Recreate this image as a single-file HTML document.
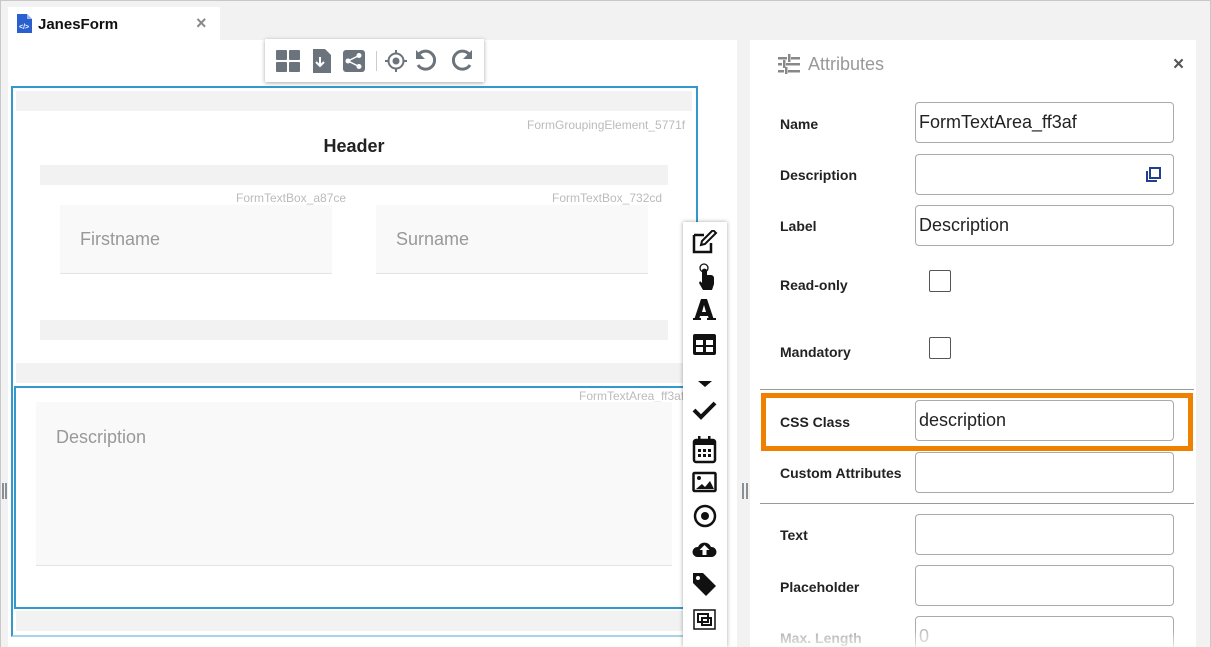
<!DOCTYPE html>
<html><head><meta charset="utf-8"><style>
*{box-sizing:border-box;margin:0;padding:0}
html,body{width:1211px;height:647px;overflow:hidden}
body{background:#f2f2f2;font-family:"Liberation Sans",sans-serif;position:relative}
.a{position:absolute}
.bar{position:absolute;background:#f2f2f2}
.lbl{position:absolute;font-size:12px;color:#bbb;white-space:nowrap}
.inp{position:absolute;background:#f9f9f9;border-bottom:1px solid #e3e3e3;color:#999;font-size:18px}
.fl{position:absolute;left:780px;font-size:14px;font-weight:bold;color:#222}
.fi{position:absolute;left:915px;width:259px;height:41px;border:1px solid #aaa;border-radius:4px;background:#fff;font-size:18px;color:#222;padding:9px 0 0 3px}
.cb{position:absolute;left:929px;width:22px;height:22px;border:1.5px solid #555;border-radius:2px;background:#fff}
</style></head><body>
<div class="a" style="left:8px;top:7px;width:212px;height:34px;background:#fff"></div>
<svg class="a" style="left:17px;top:14px" width="15" height="19" viewBox="0 0 15 19"><path d="M0 0h10l5 5v14H0z" fill="#2a5fd0"/><path d="M10 0v5h5" fill="#9bb7ee"/><text x="2" y="15" font-size="7" fill="#fff" font-family="Liberation Sans" font-weight="bold">&lt;/&gt;</text></svg>
<div class="a" style="left:38px;top:16px;font-size:15px;font-weight:bold;color:#111">JanesForm</div>
<div class="a" style="left:196px;top:13px;font-size:18px;color:#888;font-weight:bold">×</div>
<div class="a" style="left:8px;top:40px;width:729px;height:607px;background:#fff"></div>
<div class="a" style="left:2px;top:483px;width:5px;height:16px;border-left:2px solid #8a8f96;border-right:2px solid #8a8f96"></div>
<div class="a" style="left:742px;top:483px;width:6px;height:16px;border-left:2px solid #8a8f96;border-right:2px solid #8a8f96"></div>
<div class="a" style="left:750px;top:40px;width:446px;height:607px;background:#fff"></div>
<div class="a" style="left:11px;top:86px;width:687px;height:551px;border:2px solid #3399cc;border-bottom-color:#a8d4ea"></div>
<div class="bar" style="left:16px;top:91px;width:676px;height:20px"></div>
<div class="lbl" style="left:527px;top:118px">FormGroupingElement_5771f</div>
<div class="a" style="left:0;width:708px;top:136px;text-align:center;font-size:18px;font-weight:bold;color:#222">Header</div>
<div class="bar" style="left:40px;top:165px;width:628px;height:20px"></div>
<div class="lbl" style="left:236px;top:191px">FormTextBox_a87ce</div>
<div class="lbl" style="left:552px;top:191px">FormTextBox_732cd</div>
<div class="inp" style="left:60px;top:205px;width:272px;height:69px;padding:24px 0 0 20px">Firstname</div>
<div class="inp" style="left:376px;top:205px;width:272px;height:69px;padding:24px 0 0 20px">Surname</div>
<div class="bar" style="left:40px;top:320px;width:628px;height:20px"></div>
<div class="bar" style="left:16px;top:363px;width:676px;height:20px"></div>
<div class="a" style="left:14px;top:386px;width:690px;height:223px;border:2px solid #3399cc"></div>
<div class="lbl" style="left:579px;top:389px">FormTextArea_ff3af</div>
<div class="inp" style="left:36px;top:402px;width:636px;height:164px;padding:25px 0 0 20px">Description</div>
<div class="bar" style="left:16px;top:611px;width:676px;height:20px"></div>
<div class="a" style="left:265px;top:39px;width:219px;height:43px;background:#fff;box-shadow:0 1px 4px rgba(0,0,0,.35)"></div>
<svg class="a" style="left:276px;top:48px" width="200" height="26" viewBox="0 0 200 26" fill="#6b737c">
<rect x="0" y="2" width="11" height="10" rx="1"/><rect x="13" y="2" width="11" height="10" rx="1"/><rect x="0" y="14" width="11" height="10" rx="1"/><rect x="13" y="14" width="11" height="10" rx="1"/>
<path d="M37 1h12l6 6v18H37z"/><path d="M44 9v8m-4-3l4 4 4-4" stroke="#fff" stroke-width="2" fill="none"/>
<rect x="67" y="2" width="22" height="22" rx="3"/><circle cx="72" cy="13" r="2.5" fill="#fff"/><circle cx="83" cy="7.5" r="2.5" fill="#fff"/><circle cx="83" cy="18.5" r="2.5" fill="#fff"/><path d="M72 13l11-5.5M72 13l11 5.5" stroke="#fff" stroke-width="1.5"/>
<rect x="100" y="3" width="1" height="20" fill="#ccc"/>
<circle cx="120" cy="13" r="7.5" fill="none" stroke="#6b737c" stroke-width="2"/><circle cx="120" cy="13" r="3.5"/><path d="M120 2v4M120 20v4M109 13h4M127 13h4" stroke="#6b737c" stroke-width="2"/>
<path d="M143 6a9 9 0 1 1-1 11" fill="none" stroke="#6b737c" stroke-width="3"/><path d="M140 2v9h9z"/>
<path d="M193 6a9 9 0 1 0 1 11" fill="none" stroke="#6b737c" stroke-width="3"/><path d="M196 2v9h-9z"/>
</svg>
<div class="a" style="left:683px;top:222px;width:44px;height:425px;background:#fff;box-shadow:0 0 4px rgba(0,0,0,.35)">
<svg class="a" style="left:9px;top:8px" width="26" height="415" viewBox="0 0 26 415" fill="#111">
<path d="M2 5h10M2 5v17h17v-9" stroke="#111" stroke-width="2.5" fill="none"/><path d="M9 15l1-4 11-11 3 3-11 11z" stroke="#111" stroke-width="2" fill="none"/>
<path d="M10 40a3 3 0 0 1 5 0v5h4a3 3 0 0 1 3 3v6l-2 6h-9l-4-7 1-2 2 2z"/><circle cx="12" cy="38" r="4" fill="none" stroke="#111" stroke-width="1.3"/>
<path d="M9 69h6l7 21h-5l-1-4h-8l-1 4H2zM10 82h4l-2-7z" fill-rule="evenodd"/><path d="M1 89h8M15 89h9" stroke="#111" stroke-width="2"/>
<rect x="1" y="104" width="23" height="21" rx="2"/><rect x="4" y="110" width="7" height="5" fill="#fff"/><rect x="14" y="110" width="7" height="5" fill="#fff"/><rect x="4" y="117" width="7" height="5" fill="#fff"/><rect x="14" y="117" width="7" height="5" fill="#fff"/>
<path d="M6 151h14l-7 6z"/>
<path d="M2 180l7 7 14-14" stroke="#111" stroke-width="4" fill="none"/>
<rect x="2" y="210" width="21" height="22" rx="2" fill="none" stroke="#111" stroke-width="2.5"/><rect x="2" y="210" width="21" height="5"/><rect x="6" y="206" width="2.5" height="5"/><rect x="16" y="206" width="2.5" height="5"/><g><rect x="6" y="219" width="3" height="3"/><rect x="11" y="219" width="3" height="3"/><rect x="16" y="219" width="3" height="3"/><rect x="6" y="224" width="3" height="3"/><rect x="11" y="224" width="3" height="3"/><rect x="16" y="224" width="3" height="3"/></g>
<rect x="1.5" y="243" width="22" height="18" rx="1" fill="none" stroke="#111" stroke-width="2.5"/><circle cx="7" cy="248" r="2"/><path d="M4 259l6-5 3 3 5-6 4 8z"/>
<circle cx="13" cy="286" r="10" fill="none" stroke="#111" stroke-width="2.5"/><circle cx="13" cy="286" r="4"/>
<path d="M5 327a5 5 0 0 1 1-10 7 7 0 0 1 13 0 5 5 0 0 1 1 10z"/><path d="M12.5 315l-5 5h3v5h4v-5h3z" fill="#fff"/>
<path d="M1 343v10l13 13 10-10-13-13z"/><circle cx="6" cy="348" r="2" fill="#fff"/>
<rect x="2" y="380" width="21" height="19" fill="none" stroke="#111" stroke-width="1.5"/><rect x="6" y="384" width="10" height="8" fill="none" stroke="#111" stroke-width="2"/><rect x="10" y="388" width="9" height="7" fill="none" stroke="#111" stroke-width="2"/>
</svg></div>
<svg class="a" style="left:778px;top:54px" width="22" height="20" viewBox="0 0 22 20" fill="#888"><rect x="0" y="3" width="9" height="2.5"/><rect x="13" y="3" width="9" height="2.5"/><rect x="10" y="0" width="2.5" height="8"/><rect x="0" y="9" width="4" height="2.5"/><rect x="8" y="9" width="14" height="2.5"/><rect x="5" y="6" width="2.5" height="8"/><rect x="0" y="16" width="6" height="2.5"/><rect x="10" y="16" width="12" height="2.5"/><rect x="7" y="13" width="2.5" height="7"/></svg>
<div class="a" style="left:808px;top:54px;font-size:18px;color:#999">Attributes</div>
<div class="a" style="left:1173px;top:54px;font-size:19px;color:#555;font-weight:bold">×</div>
<div class="fl" style="top:116px">Name</div><div class="fi" style="top:102px">FormTextArea_ff3af</div>
<div class="fl" style="top:167px">Description</div><div class="fi" style="top:154px"></div>
<svg class="a" style="left:1145px;top:166px" width="17" height="17" viewBox="0 0 17 17" fill="none" stroke="#1f3f8f" stroke-width="2"><rect x="5" y="2" width="10" height="10"/><path d="M2 5v10h10"/></svg>
<div class="fl" style="top:218px">Label</div><div class="fi" style="top:205px">Description</div>
<div class="fl" style="top:277px">Read-only</div><div class="cb" style="top:270px"></div>
<div class="fl" style="top:344px">Mandatory</div><div class="cb" style="top:337px"></div>
<div class="a" style="left:760px;top:389px;width:434px;height:1px;background:#999"></div>
<div class="a" style="left:761px;top:393px;width:432px;height:58px;border:5px solid #f08000"></div>
<div class="fl" style="top:414px">CSS Class</div><div class="fi" style="top:400px">description</div>
<div class="fl" style="top:465px">Custom Attributes</div><div class="fi" style="top:452px"></div>
<div class="a" style="left:760px;top:503px;width:434px;height:1px;background:#999"></div>
<div class="fl" style="top:527px">Text</div><div class="fi" style="top:514px"></div>
<div class="fl" style="top:579px">Placeholder</div><div class="fi" style="top:565px"></div>
<div class="fl" style="top:630px;color:#aaa">Max. Length</div><div class="fi" style="top:616px;color:#bbb">0</div>
<div class="a" style="left:750px;top:630px;width:446px;height:17px;background:linear-gradient(rgba(255,255,255,0),rgba(255,255,255,.7))"></div>
<div class="a" style="left:0;top:0;width:1211px;height:647px;border:1px solid #c8c8c8;border-bottom:none;pointer-events:none"></div>
</body></html>
